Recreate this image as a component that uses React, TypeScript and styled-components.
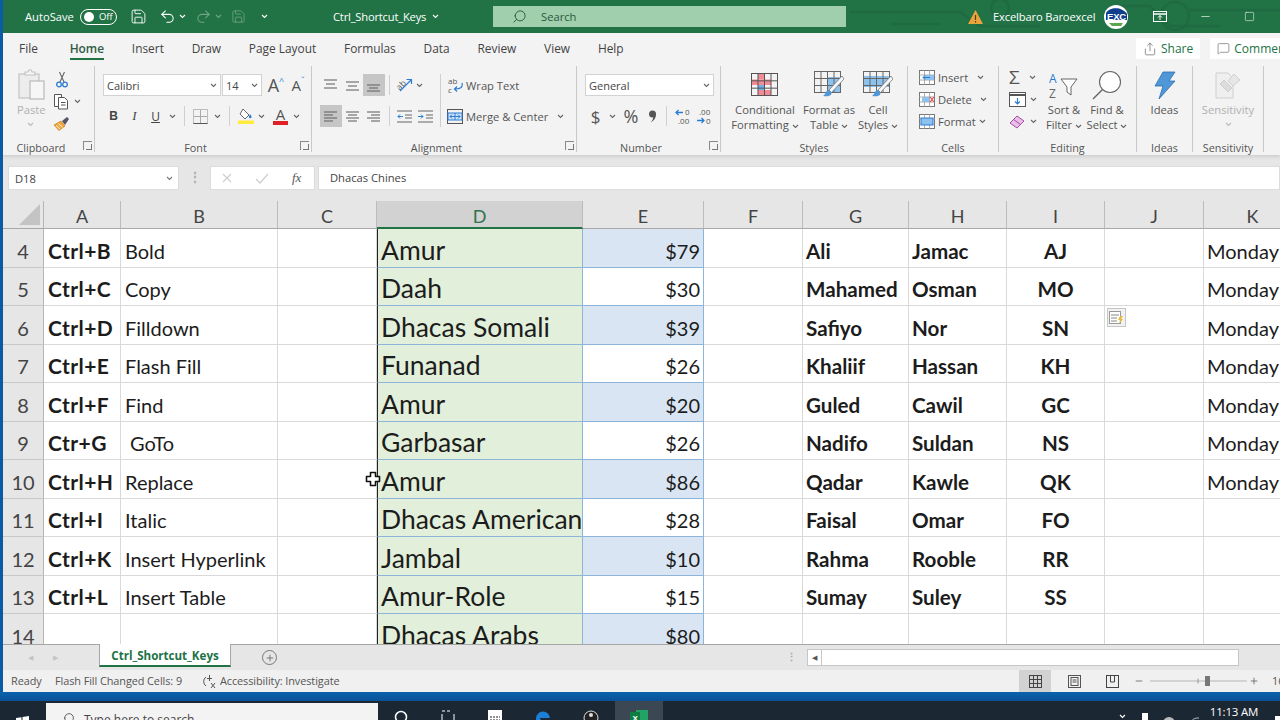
import * as React from 'react'
import styled, { createGlobalStyle } from 'styled-components'
import { Search, Save, Undo2, Redo2, Share, MessageSquare, Minus, Plus, Square } from 'lucide-react'

const UI = '"Open Sans", "Noto Sans", sans-serif'
const SHEET = 'Lato, "Liberation Sans", sans-serif'

const Global = createGlobalStyle`
  html, body { margin: 0; padding: 0; width: 1280px; height: 720px; overflow: hidden; background: #0a5ba6; }
  #root { width: 1280px; height: 720px; }
  * { box-sizing: border-box; }
`

const Screen = styled.div`
  width: 1280px;
  height: 720px;
  display: flex;
  flex-direction: column;
  overflow: hidden;
  font-family: ${UI};
`
const Desktop = styled.div`
  height: 692px;
  padding-left: 3px;
  background: #0a5ba6;
  flex-shrink: 0;
`
const Excel = styled.div`
  width: 1277px;
  height: 692px;
  display: flex;
  flex-direction: column;
  overflow: hidden;
  background: #e6e6e6;
`

/* title bar */
const TitleBar = styled.div`
  height: 33px;
  flex-shrink: 0;
  background: #217346;
  color: #fff;
  display: flex;
  align-items: center;
  font-size: 11.2px;
  position: relative;
  isolation: isolate;
`
const TitleArt = styled.svg`
  position: absolute;
  right: 0;
  top: 0;
  z-index: -1;
`
const Qat = styled.div`
  width: 330px;
  padding-left: 22px;
  display: flex;
  align-items: center;
  flex-shrink: 0;
`
const QatItem = styled.span<{ $ml?: number; $dim?: boolean }>`
  margin-left: ${p => p.$ml ?? 0}px;
  display: inline-flex;
  align-items: center;
  opacity: ${p => (p.$dim ? 0.35 : 1)};
`
const Toggle = styled.span`
  width: 37px;
  height: 16px;
  margin-left: 6px;
  border: 1px solid #fff;
  border-radius: 8px;
  display: flex;
  align-items: center;
  padding-left: 3px;
  gap: 5px;
  font-size: 9.5px;
  &::before {
    content: '';
    width: 10px;
    height: 10px;
    border-radius: 50%;
    background: #fff;
  }
`
const DocTitle = styled.div`
  width: 160px;
  flex-shrink: 0;
  display: flex;
  align-items: center;
  gap: 6px;
  letter-spacing: -0.2px;
`
const SearchBox = styled.div`
  width: 353px;
  height: 21px;
  flex-shrink: 0;
  background: #9fcfac;
  color: #2a5a3c;
  display: flex;
  align-items: center;
  padding-left: 19px;
  gap: 14px;
`
const Account = styled.div`
  margin-left: 122px;
  display: flex;
  align-items: center;
  flex-shrink: 0;
  letter-spacing: -0.15px;
`
const Who = styled.span`
  margin-left: 10px;
  width: 111px;
  white-space: nowrap;
`
const WinButton = styled.span<{ $ml: number }>`
  margin-left: ${p => p.$ml}px;
  display: inline-flex;
`

/* tabs */
const TabRow = styled.div`
  height: 29px;
  flex-shrink: 0;
  background: #f3f3f3;
  display: flex;
  align-items: flex-end;
`
const TabList = styled.div`
  width: 1133px;
  flex-shrink: 0;
  padding-left: 16px;
  display: flex;
  gap: 27.8px;
`
const Tab = styled.span<{ $on?: boolean; $first?: boolean }>`
  height: 27px;
  padding-top: 3px;
  line-height: 24px;
  font-size: 11.9px;
  color: ${p => (p.$on ? '#2f5a43' : '#444')};
  font-weight: ${p => (p.$on ? 600 : 400)};
  border-bottom: 2px solid ${p => (p.$on ? '#217346' : 'transparent')};
  margin-right: ${p => (p.$first ? 4 : 0)}px;
  margin-bottom: 2px;
`
const TabActions = styled.div`
  display: flex;
  gap: 10px;
  align-self: flex-start;
  margin-top: 5px;
  flex-shrink: 0;
`
const ActionButton = styled.span`
  height: 21px;
  padding: 0 7px;
  background: #fff;
  color: #217346;
  font-size: 12px;
  display: flex;
  align-items: center;
  gap: 4px;
  white-space: nowrap;
  flex-shrink: 0;
`

/* ribbon */
const Ribbon = styled.div`
  height: 93px;
  flex-shrink: 0;
  background: #f3f3f3;
  padding: 4px 0 3px;
  display: flex;
  box-shadow: 0 2px 3px #d0d0d0;
  position: relative;
`
const Group = styled.div<{ $w: number }>`
  width: ${p => p.$w}px;
  flex-shrink: 0;
  border-right: 1px solid #c9c9c9;
  display: flex;
  flex-direction: column;
`
const GroupBody = styled.div<{ $pl?: number; $pt?: number }>`
  flex: 1;
  padding: ${p => p.$pt ?? 8}px 0 0 ${p => p.$pl ?? 0}px;
  display: flex;
  min-height: 0;
`
const GroupLabel = styled.div<{ $launcher?: boolean }>`
  height: 17px;
  padding: 7px ${p => (p.$launcher ? 15 : 0)}px 0 0;
  line-height: 11px;
  font-size: 10.8px;
  color: #555;
  text-align: center;
  position: relative;
`
const Launcher = styled.span`
  position: absolute;
  right: 2px;
  top: 6px;
  width: 9px;
  height: 9px;
  border-left: 1px solid #888;
  border-top: 1px solid #888;
  &::after {
    content: '';
    position: absolute;
    right: 0;
    bottom: 0;
    width: 5px;
    height: 5px;
    border-right: 1.5px solid #777;
    border-bottom: 1.5px solid #777;
  }
`
const Stack = styled.div<{ $gap?: number; $w?: number }>`
  display: flex;
  flex-direction: column;
  gap: ${p => p.$gap ?? 9}px;
  width: ${p => (p.$w ? `${p.$w}px` : 'auto')};
  flex-shrink: 0;
`
const Row = styled.div<{ $h?: number }>`
  display: flex;
  align-items: center;
  height: ${p => p.$h ?? 22}px;
`
const Tool = styled.span<{ $w?: number; $on?: boolean; $ml?: number }>`
  width: ${p => p.$w ?? 21}px;
  height: 22px;
  margin-left: ${p => p.$ml ?? 0}px;
  flex-shrink: 0;
  display: inline-flex;
  align-items: center;
  justify-content: center;
  background: ${p => (p.$on ? '#c6c6c6' : 'transparent')};
  color: #444;
  font-size: 12px;
`
const ToolSep = styled.span<{ $mx?: number }>`
  width: 1px;
  height: 20px;
  background: #cfcfcf;
  margin: 0 ${p => p.$mx ?? 4}px;
  flex-shrink: 0;
`
const GroupSep = styled.span`
  width: 1px;
  height: 53px;
  background: #cfcfcf;
  flex-shrink: 0;
`
const Select = styled.div<{ $w: number }>`
  width: ${p => p.$w}px;
  height: 22px;
  background: #fff;
  border: 1px solid #d2d2d2;
  margin-right: 1px;
  flex-shrink: 0;
  display: flex;
  align-items: center;
  justify-content: space-between;
  padding: 0 3px 0 3px;
  font-size: 11px;
  color: #444;
`
const SmallText = styled.span<{ $dim?: boolean; $ml?: number }>`
  font-size: 11.2px;
  color: ${p => (p.$dim ? '#b0b0b0' : '#555')};
  white-space: nowrap;
  line-height: 15px;
  margin-left: ${p => p.$ml ?? 0}px;
`
const Big = styled.div<{ $w: number; $mt?: number }>`
  width: ${p => p.$w}px;
  margin-top: ${p => p.$mt ?? 0}px;
  flex-shrink: 0;
  display: flex;
  flex-direction: column;
  align-items: center;
`
const BigIcon = styled.div`
  height: 34px;
  display: flex;
  align-items: center;
  justify-content: center;
`
const ClipTools = styled.div`
  margin-left: 6px;
  display: flex;
  flex-direction: column;
`
const LetterFont = styled.span<{ $big?: boolean }>`
  font-size: ${p => (p.$big ? 18 : 15)}px;
  color: #555;
  font-family: ${UI};
`
const Sup = styled.span`
  color: #2b7cd3;
  font-size: 9px;
  line-height: 8px;
  align-self: flex-start;
  margin-top: 3px;
`
const ColorLetter = styled.span<{ $bar: string }>`
  display: inline-block;
  border-bottom: 4px solid ${p => p.$bar};
  font-size: 15px;
  line-height: 14px;
  color: #555;
  padding: 0 3px;
`
const Bold = styled.b`
  font-size: 12px;
  color: #444;
  font-family: "Liberation Sans", sans-serif;
`
const Ital = styled.i`
  font-size: 13px;
  color: #444;
  font-family: "Liberation Serif", serif;
`
const Under = styled.u`
  font-size: 12px;
  color: #444;
`
const Glyph = styled.span<{ $size: number }>`
  font-size: ${p => p.$size}px;
  color: #555;
`

/* formula bar */
const FormulaBar = styled.div`
  height: 46px;
  flex-shrink: 0;
  padding: 11px 0 11px 5px;
  display: flex;
  align-items: stretch;
  background: #e6e6e6;
`
const NameBox = styled.div`
  width: 171px;
  background: #fff;
  border: 1px solid #dcdcdc;
  display: flex;
  align-items: center;
  justify-content: space-between;
  padding: 0 5px 0 6px;
  font-size: 11.2px;
  color: #444;
`
const Dots = styled.div`
  width: 31px;
  text-align: center;
  color: #aaa;
  font-size: 12px;
  line-height: 22px;
  font-weight: 700;
`
const FxBox = styled.div`
  width: 105px;
  background: #fff;
  border: 1px solid #dcdcdc;
  display: flex;
  align-items: center;
  padding-left: 11px;
  gap: 23px;
`
const FxLabel = styled.i`
  font-family: "Liberation Serif", serif;
  font-size: 13px;
  color: #555;
`
const Input = styled.div`
  flex: 1;
  margin-left: 3px;
  background: #fff;
  border: 1px solid #dcdcdc;
  padding-left: 11px;
  font-size: 11.2px;
  line-height: 22px;
  color: #444;
`

/* sheet */
const SheetArea = styled.div`
  height: 443px;
  flex-shrink: 0;
  overflow: hidden;
  position: relative;
  background: #fff;
`
const Grid = styled.div`
  display: grid;
  grid-template-columns: 41px 77px 157px 99px 206px 121px 99px 106px 98px 98px 99px 98px;
  grid-template-rows: 28px;
  grid-auto-rows: 38.5px;
  width: 1400px;
  font-family: ${SHEET};
`
const Corner = styled.div`
  background: #e6e6e6;
  border-right: 1px solid #b5b5b5;
  border-bottom: 1px solid #a8a8a8;
  display: flex;
  align-items: flex-end;
  justify-content: flex-end;
  padding: 0 3px 3px 0;
  &::after {
    content: '';
    width: 0;
    height: 0;
    border-left: 21px solid transparent;
    border-bottom: 21px solid #c4c4c4;
  }
`
const ColHead = styled.div<{ $on?: boolean }>`
  background: ${p => (p.$on ? '#d2d2d2' : '#e6e6e6')};
  color: ${p => (p.$on ? '#2f7350' : '#444')};
  border-right: 1px solid #bcbcbc;
  border-bottom: ${p => (p.$on ? '2px solid #217346' : '1px solid #a8a8a8')};
  font-size: 18px;
  line-height: 31px;
  text-align: center;
`
const RowHead = styled.div`
  background: #e6e6e6;
  color: #444;
  border-right: 1px solid #b5b5b5;
  border-bottom: 1px solid #c8c8c8;
  font-size: 20px;
  display: flex;
  align-items: flex-end;
  justify-content: center;
  padding-bottom: 4px;
`
const Cell = styled.div<{ $bold?: boolean; $center?: boolean; $pad?: number }>`
  border-right: 1px solid #d9d9d9;
  border-bottom: 1px solid #d9d9d9;
  color: #1c1c1c;
  font-size: ${p => (p.$bold ? 20.6 : 20)}px;
  font-weight: ${p => (p.$bold ? 700 : 400)};
  display: flex;
  align-items: flex-end;
  justify-content: ${p => (p.$center ? 'center' : 'flex-start')};
  padding: 0 0 4px ${p => (p.$center ? 0 : p.$pad ?? 3)}px;
  white-space: pre;
  overflow: visible;
`
const KeyCell = styled(Cell)`
  font-size: 21px;
  letter-spacing: 0.45px;
`
const NameCell = styled.div`
  background: #e2efda;
  border-left: 1.5px solid #222;
  border-right: 1px solid #8db4d9;
  border-bottom: 1px solid #8db4d9;
  color: #1c1c1c;
  font-size: 26.5px;
  display: flex;
  align-items: flex-end;
  padding: 0 0 1px 3px;
  white-space: nowrap;
`
const PriceCell = styled.div<{ $tint: boolean }>`
  background: ${p => (p.$tint ? '#d9e5f3' : '#fff')};
  border-right: 1px solid #8db4d9;
  border-bottom: 1px solid #8db4d9;
  color: #1c1c1c;
  font-size: 20px;
  display: flex;
  align-items: flex-end;
  justify-content: flex-end;
  padding: 0 3px 4px 0;
`
const FlashTag = styled.div`
  position: absolute;
  left: 1104px;
  top: 107px;
  width: 19px;
  height: 19px;
  background: #f2f2f2;
  border: 1px solid #c6c6c6;
  display: flex;
  align-items: center;
  justify-content: center;
`
const CursorMark = styled.div`
  position: absolute;
  left: 362px;
  top: 270px;
  display: flex;
`

/* sheet tabs */
const SheetBar = styled.div`
  height: 26px;
  flex-shrink: 0;
  background: #e6e6e6;
  border-top: 1px solid #a6a6a6;
  display: flex;
  align-items: flex-start;
`
const NavArrows = styled.div`
  width: 96px;
  padding-left: 25px;
  height: 24px;
  display: flex;
  align-items: center;
  gap: 20px;
  color: #c4c4c4;
  font-size: 7px;
`
const SheetTab = styled.div`
  width: 132px;
  height: 23px;
  margin-top: -1px;
  padding-top: 1px;
  background: #fff;
  border-left: 1px solid #a6a6a6;
  border-right: 1px solid #a6a6a6;
  border-bottom: 2px solid #217346;
  color: #217346;
  font-size: 11.6px;
  font-weight: 700;
  letter-spacing: -0.02px;
  text-align: center;
  line-height: 22px;
  white-space: nowrap;
`
const AddSheet = styled.div`
  width: 15px;
  height: 15px;
  margin: 5px 0 0 31px;
  border: 1px solid #777;
  border-radius: 50%;
  display: flex;
  align-items: center;
  justify-content: center;
`
const Splitter = styled.div`
  margin: 0 0 0 506px;
  width: 16px;
  color: #aaa;
  font-size: 11px;
  line-height: 23px;
  font-weight: 700;
  text-align: center;
`
const ScrollBar = styled.div`
  display: flex;
  height: 17px;
  margin: 4px 0 0 8px;
  border: 1px solid #c6c6c6;
  background: #fff;
`
const ScrollArrow = styled.div`
  width: 14px;
  border-right: 1px solid #c6c6c6;
  color: #555;
  font-size: 7px;
  line-height: 15px;
  text-align: center;
`
const ScrollThumb = styled.div`
  width: 416px;
`

/* status bar */
const StatusBar = styled.div`
  height: 22px;
  flex-shrink: 0;
  background: #f0f0f0;
  display: flex;
  align-items: center;
  font-size: 10.9px;
  color: #555;
  letter-spacing: -0.08px;
`
const StatusText = styled.span<{ $ml: number; $w: number }>`
  margin-left: ${p => p.$ml}px;
  width: ${p => p.$w}px;
  padding-bottom: 2px;
  white-space: nowrap;
  flex-shrink: 0;
`
const ViewButton = styled.span<{ $on?: boolean; $w: number }>`
  width: ${p => p.$w}px;
  height: 22px;
  background: ${p => (p.$on ? '#d2d2d2' : 'transparent')};
  display: flex;
  align-items: center;
  justify-content: center;
  flex-shrink: 0;
`
const ZoomValue = styled.span`
  margin-left: 11px;
  padding-bottom: 2px;
  white-space: nowrap;
  flex-shrink: 0;
`

/* windows bits */
const BlueBar = styled.div`
  height: 9px;
  flex-shrink: 0;
  background: linear-gradient(#0a62ae, #0a5296);
`
const Taskbar = styled.div`
  height: 19px;
  flex-shrink: 0;
  background: #1b2733;
  display: flex;
  overflow: hidden;
  color: #fff;
`
const StartButton = styled.div`
  width: 46px;
  flex-shrink: 0;
  padding: 11px 0 0 16px;
`
const TaskSearch = styled.div`
  width: 332px;
  height: 19px;
  flex-shrink: 0;
  margin-top: 2px;
  background: #f3f3f3;
  color: #444;
  font-size: 12px;
  padding: 9px 0 0 16px;
  display: flex;
  gap: 9px;
  line-height: 16px;
  white-space: nowrap;
`
const TaskIcon = styled.div<{ $w?: number; $on?: boolean }>`
  width: ${p => p.$w ?? 48}px;
  background: ${p => (p.$on ? '#3b4752' : 'transparent')};
  display: flex;
  justify-content: center;
  padding-top: 9px;
  flex-shrink: 0;
`
const Tray = styled.div`
  display: flex;
  align-items: flex-start;
  flex-shrink: 0;
  padding-left: 453px;
`
const TrayIcon = styled.span<{ $w: number; $pt: number }>`
  width: ${p => p.$w}px;
  padding-top: ${p => p.$pt}px;
  display: flex;
  justify-content: center;
  flex-shrink: 0;
`
const Clock = styled.div`
  width: 54px;
  flex-shrink: 0;
  font-size: 11.5px;
  line-height: 22px;
  letter-spacing: -0.2px;
  text-align: center;
  white-space: nowrap;
`

/* drawings */
const Caret = ({ c = '#666', ml = 0 }: { c?: string; ml?: number }) => (
  <svg width="7" height="5" viewBox="0 0 7 5" style={{ marginLeft: ml, flexShrink: 0 }}>
    <path d="M1 1l2.500 2.500L6 1" fill="none" stroke={c} strokeWidth="1.100" />
  </svg>
)
const Lines = ({ rows }: { rows: number[][] }) => (
  <svg width="15" height="15" viewBox="0 0 15 15">
    {rows.map((r, i) => (
      <path key={i} d={`M${r[0]} ${r[2]}H${r[1]}`} stroke="#666" strokeWidth="1.100" />
    ))}
  </svg>
)
const TableGrid = ({ x, y, w, h, c = '#555' }: { x: number; y: number; w: number; h: number; c?: string }) => (
  <g fill="none" stroke={c} strokeWidth="1">
    <rect x={x} y={y} width={w} height={h} />
    <path d={`M${x + w / 4} ${y}v${h}M${x + w / 2} ${y}v${h}M${x + (3 * w) / 4} ${y}v${h}M${x} ${y + h / 3}h${w}M${x} ${y + (2 * h) / 3}h${w}`} />
  </g>
)
const PasteIcon = () => (
  <svg width="28" height="32" viewBox="0 0 28 32" fill="none" stroke="#c4c4c4" strokeWidth="1.200">
    <rect x="1" y="5" width="20" height="24" fill="#ececec" />
    <path d="M7 5V3h3l1-2 2 0 1 2h3v3H7z" fill="#f5f5f5" />
    <rect x="12" y="12" width="14" height="18" fill="#f6f6f6" stroke="#b9b9b9" />
  </svg>
)
const CutIcon = () => (
  <svg width="12" height="17" viewBox="0 0 12 17" fill="none">
    <path d="M3.500 1l4.500 10M8.500 1L4 11" stroke="#666" strokeWidth="1.100" />
    <circle cx="3" cy="13.500" r="2.300" stroke="#2b7cd3" strokeWidth="1.300" />
    <circle cx="9" cy="13.500" r="2.300" stroke="#2b7cd3" strokeWidth="1.300" />
  </svg>
)
const CopyIcon = () => (
  <svg width="17" height="17" viewBox="0 0 17 17" fill="#fff" stroke="#555" style={{ flexShrink: 0 }}>
    <path d="M1.500 1.500h7v12h-7z" />
    <path d="M5.500 4.500h6l3 3v8.500h-9z" />
    <path d="M8 9.500h4.500M8 12h4.500" />
  </svg>
)
const PainterIcon = () => (
  <svg width="17" height="15" viewBox="0 0 17 15">
    <path d="M1 9l7-4 4 5-6 4.500z" fill="#f0a93c" stroke="#c47f1e" strokeWidth=".7" />
    <path d="M3 9.500l4 3.500M5.500 7.700l4 3.500" stroke="#fff" strokeWidth=".8" />
    <path d="M9 5l5-4 2 2-4 6z" fill="#556" />
  </svg>
)
const BordersIcon = () => (
  <svg width="15" height="15" viewBox="0 0 15 15" fill="none" stroke="#aaa" style={{ flexShrink: 0 }}>
    <rect x=".5" y=".5" width="14" height="14" strokeDasharray="1 1" stroke="#888" />
    <path d="M7.500 1v13M1 7.500h13" />
    <path d="M.5 14.500h14" stroke="#555" />
  </svg>
)
const FillIcon = () => (
  <svg width="16" height="16" viewBox="0 0 16 16" style={{ flexShrink: 0 }}>
    <path d="M5 1l6 6-4 4-5-5z" fill="#fff" stroke="#666" />
    <path d="M12 6c1 1.500 1.500 2 1.500 3a1.300 1.300 0 0 1-2.600 0c0-1 .6-1.500 1.100-3z" fill="#2b7cd3" />
    <rect y="12.500" width="16" height="3.500" fill="#ffeb3b" />
  </svg>
)
const OrientIcon = () => (
  <svg width="17" height="16" viewBox="0 0 17 16">
    <text x="0" y="11" fontSize="8.500" fill="#555" fontFamily="Open Sans" transform="rotate(-45 5 8)">ab</text>
    <path d="M4 14L15 3M10.500 2.500H15.500V7" fill="none" stroke="#2b7cd3" strokeWidth="1.200" />
  </svg>
)
const IndentIcon = ({ dir }: { dir: 'in' | 'out' }) => (
  <svg width="15" height="13" viewBox="0 0 15 13" fill="none">
    <path d="M0 1h15M0 12h15M8 5h7M8 8h7" stroke="#666" />
    <path d={dir === 'out' ? 'M6 6.500H1M3 4.500L1 6.500l2 2' : 'M0 6.500h5M3 4.500l2 2-2 2'} stroke="#2b7cd3" />
  </svg>
)
const WrapIcon = () => (
  <svg width="15" height="17" viewBox="0 0 15 17">
    <text x="0" y="7" fontSize="8" fill="#555" fontFamily="Open Sans">ab</text>
    <text x="0" y="16" fontSize="8" fill="#555" fontFamily="Open Sans">c</text>
    <path d="M14 6c1 4-1 6-7 6M9 9.500L6.500 12 9 14.500" fill="none" stroke="#2b7cd3" strokeWidth="1.200" />
  </svg>
)
const MergeIcon = () => (
  <svg width="16" height="15" viewBox="0 0 16 15" fill="none">
    <rect x=".5" y=".5" width="15" height="14" stroke="#555" />
    <rect x="1" y="4" width="14" height="7" fill="#cfe3f6" stroke="#2b7cd3" />
    <path d="M3 7.500h10M5 5.500l-2 2 2 2M11 5.500l2 2-2 2M8 4v7" stroke="#2b7cd3" />
  </svg>
)
const CommaIcon = () => (
  <svg width="9" height="13" viewBox="0 0 9 13">
    <circle cx="4.500" cy="4" r="3.500" fill="#555" />
    <path d="M8 4c0 4-2 7-5.500 8.500C5 10 5.500 8 5 6z" fill="#555" />
  </svg>
)
const DecimalsIcon = ({ more }: { more?: boolean }) => (
  <svg width="18" height="17" viewBox="0 0 18 17">
    {more ? (
      <>
        <path d="M8 4.500H1M3.500 2L1 4.500 3.500 7" fill="none" stroke="#2b7cd3" strokeWidth="1.300" />
        <text x="10" y="7" fontSize="8" fill="#555" fontFamily="Open Sans">0</text>
        <text x="3" y="16" fontSize="8" fill="#555" fontFamily="Open Sans">.00</text>
      </>
    ) : (
      <>
        <text x="3" y="7" fontSize="8" fill="#555" fontFamily="Open Sans">.00</text>
        <path d="M1 12.500h7M5.500 10L8 12.500 5.500 15" fill="none" stroke="#2b7cd3" strokeWidth="1.300" />
        <text x="10" y="16" fontSize="8" fill="#555" fontFamily="Open Sans">0</text>
      </>
    )}
  </svg>
)
const CondFormatIcon = () => (
  <svg width="28" height="24" viewBox="0 0 28 24">
    <rect x="7" y="1" width="7" height="5.500" fill="#f28b96" />
    <rect x="1" y="6.500" width="19" height="5.500" fill="#f28b96" />
    <rect x="7" y="12" width="7" height="5" fill="#6fb1e8" />
    <rect x="7" y="17" width="13" height="6" fill="#f28b96" />
    <TableGrid x={.5} y={.5} w={26} h={22} />
  </svg>
)
const TableBrushIcon = ({ fill }: { fill: boolean }) => (
  <svg width="30" height="28" viewBox="0 0 30 28">
    {fill ? <rect x="13" y="6" width="14" height="16" fill="#8dc2ef" /> : <rect x="1" y="5" width="26" height="11" fill="#8dc2ef" />}
    <TableGrid x={.5} y={.5} w={26} h={21} c="#666" />
    <path d="M28 5L15 19l2.500 2.500L30 8z" fill="#f7f7f7" stroke="#777" strokeWidth=".8" />
    <path d="M15 19c-3 0-3 4-6 6 4 1 9 0 8.500-3.500z" fill="#4f97d7" />
  </svg>
)
const CellIcon = ({ kind }: { kind: 'insert' | 'delete' | 'format' }) => (
  <svg width="16" height="15" viewBox="0 0 16 15" style={{ flexShrink: 0 }}>
    <rect x=".5" y=".5" width="15" height="14" fill="#fff" stroke="#777" />
    <path d="M5.500 0v15M10.500 0v15M0 5h16M0 10h16" stroke="#999" strokeWidth=".8" />
    {kind === 'insert' && <><rect x="6" y="5" width="9" height="5" fill="#8dc2ef" /><path d="M11 7.500H4M6 5.500l-2 2 2 2" stroke="#2b7cd3" fill="none" /></>}
    {kind === 'delete' && <><rect x="3" y="5" width="7" height="5" fill="#8dc2ef" /><path d="M11 5l4 5M15 5l-4 5" stroke="#e04848" strokeWidth="1.200" /></>}
    {kind === 'format' && <rect x="2" y="4" width="12" height="7" fill="#8dc2ef" stroke="#2b7cd3" />}
  </svg>
)
const FillDownIcon = () => (
  <svg width="17" height="15" viewBox="0 0 17 15" fill="none" style={{ flexShrink: 0 }}>
    <rect x=".5" y=".5" width="16" height="14" fill="#fff" stroke="#555" />
    <path d="M1 3h15" stroke="#555" strokeWidth="2" />
    <path d="M8.500 6v6M6 9.500l2.500 2.500L11 9.500" stroke="#2b7cd3" strokeWidth="1.200" />
  </svg>
)
const EraserIcon = () => (
  <svg width="16" height="15" viewBox="0 0 16 15" style={{ flexShrink: 0 }}>
    <path d="M1 9l7-7 7 5-7 7z" fill="#e8bfe6" stroke="#a64ca6" />
    <path d="M4.500 5.500l7 5" stroke="#a64ca6" />
  </svg>
)
const SortIcon = () => (
  <svg width="30" height="28" viewBox="0 0 30 28">
    <text x="0" y="12" fontSize="12" fill="#2b7cd3" fontFamily="Open Sans">A</text>
    <text x="0" y="27" fontSize="12" fill="#666" fontFamily="Open Sans">Z</text>
    <path d="M12 8h16l-6 8v8l-4-3v-5z" fill="#fff" stroke="#666" />
  </svg>
)
const FindIcon = () => (
  <svg width="30" height="30" viewBox="0 0 30 30" fill="none" stroke="#666" strokeWidth="1.100">
    <circle cx="18" cy="12" r="10.500" fill="#fff" />
    <path d="M10.500 19.500L1 29" strokeWidth="1.500" />
  </svg>
)
const BoltIcon = () => (
  <svg width="22" height="29" viewBox="0 0 22 29">
    <path d="M9 1h12l-6 9h6L5 28l4-13H1z" fill="#4f97d7" stroke="#2b6fb3" strokeWidth=".8" />
  </svg>
)
const SensitivityIcon = () => (
  <svg width="28" height="30" viewBox="0 0 28 30" fill="none" stroke="#cfcfcf">
    <path d="M2 3h12l5 5v20H2z" fill="#efefef" />
    <path d="M6 14l8 8 4-4-8-8z" fill="#dcdcdc" />
    <path d="M14 11l6-7 6 6-7 6z" fill="#e6e6e6" />
  </svg>
)
const FlashIcon = () => (
  <svg width="15" height="14" viewBox="0 0 15 14">
    <rect x=".5" y=".5" width="11" height="12" fill="#fff" stroke="#999" />
    <path d="M2 4h8M2 7h6M2 10h6" stroke="#888" />
    <path d="M11 5h3l-2 3h2l-4 5 1-4H9z" fill="#e6b83c" />
  </svg>
)
const PlusCursor = () => (
  <svg width="16" height="16" viewBox="0 0 16 16">
    <path d="M5.500 1.500h5v4h4v5h-4v4h-5v-4h-4v-5h4z" fill="#fff" stroke="#111" strokeWidth="1.600" strokeLinejoin="round" />
  </svg>
)
const WarnIcon = () => (
  <svg width="15" height="14" viewBox="0 0 15 14">
    <path d="M7.500 0L15 14H0z" fill="#e8a33d" />
    <path d="M7.500 5v5M7.500 11v1.500" stroke="#5a3a10" strokeWidth="1.200" />
  </svg>
)
const Avatar = () => (
  <svg width="24" height="24" viewBox="0 0 24 24">
    <circle cx="12" cy="12" r="12" fill="#fff" />
    <path d="M2 8c3-6 16-7 21 1v6H2z" fill="#0f3f8c" />
    <text x="3" y="15" fontSize="9.500" fontWeight="700" fill="#fff" fontFamily="Liberation Sans">EXC</text>
    <path d="M5 18h14l-2 3H8z" fill="#5aa64a" />
  </svg>
)
const DisplayIcon = () => (
  <svg width="14" height="11" viewBox="0 0 14 11" fill="none" stroke="#fff">
    <rect x=".5" y=".5" width="13" height="10" />
    <path d="M.5 3h13" strokeWidth="1.500" />
    <path d="M7 9V4.500M5 6.500l2-2 2 2" />
  </svg>
)
const SmallCheck = () => (
  <svg width="14" height="11" viewBox="0 0 14 11" fill="none" stroke="#cfcfcf" strokeWidth="1.300">
    <path d="M1 6l4 4 8-9" />
  </svg>
)
const SmallCross = () => (
  <svg width="10" height="10" viewBox="0 0 10 10" fill="none" stroke="#cfcfcf" strokeWidth="1.300">
    <path d="M1 1l8 8M9 1l-8 8" />
  </svg>
)
const A11yIcon = () => (
  <svg width="15" height="15" viewBox="0 0 15 15" fill="none" stroke="#555" style={{ flexShrink: 0, marginLeft: 1 }}>
    <path d="M4 3a5.500 5.500 0 0 0 0 9" />
    <path d="M7.500 1v6M5 4.500h5M9 9l4 5M13 9l-4 5" />
  </svg>
)
const NormalView = () => (
  <svg width="13" height="13" viewBox="0 0 13 13" fill="none" stroke="#444">
    <rect x=".5" y=".5" width="12" height="12" />
    <path d="M4.500 0v13M8.500 0v13M0 4.500h13M0 8.500h13" />
  </svg>
)
const LayoutView = () => (
  <svg width="13" height="13" viewBox="0 0 13 13" fill="none" stroke="#555">
    <rect x=".5" y=".5" width="12" height="12" />
    <rect x="3" y="2.500" width="7" height="8" />
    <path d="M4.500 5h4M4.500 7h4" />
  </svg>
)
const BreakView = () => (
  <svg width="13" height="13" viewBox="0 0 13 13" fill="none" stroke="#444">
    <rect x=".5" y=".5" width="12" height="12" />
    <path d="M4.500 0v7h4V0" />
  </svg>
)
const ZoomSlider = () => (
  <svg width="97" height="14" viewBox="0 0 97 14" style={{ flexShrink: 0 }}>
    <path d="M0 7h97" stroke="#b5b5b5" />
    <path d="M48 4.500v5" stroke="#999" />
    <rect x="55" y="2" width="5" height="10" fill="#777" />
  </svg>
)
const WinLogo = () => (
  <svg width="13" height="13" viewBox="0 0 13 13" fill="#fff">
    <path d="M0 2l5.500-.8v5H0zM6.500 1L13 0v6.200H6.500zM0 7h5.500v5L0 11.200zM6.500 7H13v6l-6.500-1z" />
  </svg>
)
const TaskGlyph = ({ kind }: { kind: string }) => {
  if (kind === 'ring') return <svg width="14" height="14" viewBox="0 0 14 14"><circle cx="7" cy="7" r="5.500" fill="none" stroke="#fff" strokeWidth="1.500" /></svg>
  if (kind === 'view') return <svg width="14" height="14" viewBox="0 0 14 14" fill="none" stroke="#fff"><path d="M1 1h3M6 1h3M1 4v9h12V4" /></svg>
  if (kind === 'calc') return <svg width="14" height="14" viewBox="0 0 14 14"><rect width="14" height="14" fill="#fff" /><path d="M2 7h10M2 10h10" stroke="#1b2733" strokeDasharray="2 1" /></svg>
  if (kind === 'edge') return <svg width="16" height="14" viewBox="0 0 16 14"><path d="M1 9a7 7 0 0 1 14-1H5c0 3 5 4 9 2v3C8 15 1 14 1 9z" fill="#1c7fd6" /></svg>
  if (kind === 'obs') return <svg width="16" height="16" viewBox="0 0 16 16"><circle cx="8" cy="8" r="7" fill="#222" stroke="#ddd" /><circle cx="8" cy="5" r="2" fill="#ddd" /></svg>
  return <svg width="18" height="14" viewBox="0 0 18 14"><rect x="6" width="12" height="14" fill="#21a366" /><rect y="2" width="10" height="11" fill="#107c41" /><text x="2.500" y="11" fontSize="8" fill="#fff" fontWeight="700" fontFamily="Liberation Sans">X</text></svg>
}

const columns = ['A', 'B', 'C', 'D', 'E', 'F', 'G', 'H', 'I', 'J', 'K']
const rows = [
  { n: 4, key: 'Ctrl+B', what: 'Bold', item: 'Amur', price: '$79', first: 'Ali', last: 'Jamac', code: 'AJ', day: 'Monday' },
  { n: 5, key: 'Ctrl+C', what: 'Copy', item: 'Daah', price: '$30', first: 'Mahamed', last: 'Osman', code: 'MO', day: 'Monday' },
  { n: 6, key: 'Ctrl+D', what: 'Filldown', item: 'Dhacas Somali', price: '$39', first: 'Safiyo', last: 'Nor', code: 'SN', day: 'Monday' },
  { n: 7, key: 'Ctrl+E', what: 'Flash Fill', item: 'Funanad', price: '$26', first: 'Khaliif', last: 'Hassan', code: 'KH', day: 'Monday' },
  { n: 8, key: 'Ctrl+F', what: 'Find', item: 'Amur', price: '$20', first: 'Guled', last: 'Cawil', code: 'GC', day: 'Monday' },
  { n: 9, key: 'Ctr+G', what: ' GoTo', item: 'Garbasar', price: '$26', first: 'Nadifo', last: 'Suldan', code: 'NS', day: 'Monday' },
  { n: 10, key: 'Ctrl+H', what: 'Replace', item: 'Amur', price: '$86', first: 'Qadar', last: 'Kawle', code: 'QK', day: 'Monday' },
  { n: 11, key: 'Ctrl+I', what: 'Italic', item: 'Dhacas American', price: '$28', first: 'Faisal', last: 'Omar', code: 'FO', day: '' },
  { n: 12, key: 'Ctrl+K', what: 'Insert Hyperlink', item: 'Jambal', price: '$10', first: 'Rahma', last: 'Rooble', code: 'RR', day: '' },
  { n: 13, key: 'Ctrl+L', what: 'Insert Table', item: 'Amur-Role', price: '$15', first: 'Sumay', last: 'Suley', code: 'SS', day: '' },
  { n: 14, key: '', what: '', item: 'Dhacas Arabs', price: '$80', first: '', last: '', code: '', day: '' },
]
const tabs = ['Insert', 'Draw', 'Page Layout', 'Formulas', 'Data', 'Review', 'View', 'Help']

const App = () => (
  <Screen>
    <Global />
    <Desktop>
      <Excel>
        <TitleBar>
          <TitleArt width="430" height="33" viewBox="0 0 430 33" fill="none" stroke="#1f6a41" strokeWidth="2.500">
            <path d="M0 12h110l20 14h60M40 24h50M260 6h40l20 20h50M340 10h90" />
            <circle cx="150" cy="8" r="9" />
            <circle cx="325" cy="16" r="14" />
          </TitleArt>
          <Qat>
            <span>AutoSave</span>
            <Toggle>Off</Toggle>
            <QatItem $ml={13}><Save size={17} strokeWidth={1.3} /></QatItem>
            <QatItem $ml={12}><Undo2 size={17} strokeWidth={1.5} /></QatItem>
            <QatItem $ml={3}><Caret c="#fff" /></QatItem>
            <QatItem $ml={9} $dim><Redo2 size={17} strokeWidth={1.5} /></QatItem>
            <QatItem $ml={3} $dim><Caret c="#fff" /></QatItem>
            <QatItem $ml={9} $dim><Save size={15} strokeWidth={1.3} /></QatItem>
            <QatItem $ml={15}><Caret c="#fff" /></QatItem>
          </Qat>
          <DocTitle>Ctrl_Shortcut_Keys <Caret c="#fff" /></DocTitle>
          <SearchBox><Search size={15} strokeWidth={1.5} style={{ transform: 'scaleX(-1)' }} /> Search</SearchBox>
          <Account>
            <WarnIcon />
            <Who>Excelbaro Baroexcel</Who>
            <Avatar />
            <WinButton $ml={25}><DisplayIcon /></WinButton>
            <WinButton $ml={32}><Minus size={13} strokeWidth={1.2} /></WinButton>
            <WinButton $ml={32}><Square size={11} strokeWidth={1.2} /></WinButton>
          </Account>
        </TitleBar>

        <TabRow>
          <TabList>
            <Tab $first>File</Tab>
            <Tab $on>Home</Tab>
            {tabs.map(t => <Tab key={t}>{t}</Tab>)}
          </TabList>
          <TabActions>
            <ActionButton><Share size={14} strokeWidth={1.2} color="#666" /> Share</ActionButton>
            <ActionButton><MessageSquare size={13} strokeWidth={1.2} color="#666" /> Comments</ActionButton>
          </TabActions>
        </TabRow>

        <Ribbon>
          <Group $w={92}>
            <GroupBody $pt={2} $pl={14}>
              <Stack $gap={0} $w={30}>
                <BigIcon><PasteIcon /></BigIcon>
                <SmallText $dim>Paste</SmallText>
                <Row $h={14}><Caret c="#bbb" ml={10} /></Row>
              </Stack>
              <ClipTools>
                <Tool $w={17}><CutIcon /></Tool>
                <Row><CopyIcon /><Caret ml={4} /></Row>
                <Tool $w={17}><PainterIcon /></Tool>
              </ClipTools>
            </GroupBody>
            <GroupLabel $launcher>Clipboard<Launcher /></GroupLabel>
          </Group>

          <Group $w={217}>
            <GroupBody $pl={8}>
              <Stack>
                <Row>
                  <Select $w={118}>Calibri <Caret /></Select>
                  <Select $w={40}>14 <Caret /></Select>
                  <Tool $w={20} $ml={3}><LetterFont $big>A</LetterFont><Sup>^</Sup></Tool>
                  <Tool $w={20} $ml={2}><LetterFont>A</LetterFont><Sup>ˇ</Sup></Tool>
                </Row>
                <Row>
                  <Tool><Bold>B</Bold></Tool>
                  <Tool><Ital>I</Ital></Tool>
                  <Tool><Under>U</Under></Tool>
                  <Caret ml={3} />
                  <ToolSep $mx={8} />
                  <BordersIcon />
                  <Caret ml={6} />
                  <ToolSep $mx={8} />
                  <FillIcon />
                  <Caret ml={4} />
                  <Tool $w={21} $ml={5}><ColorLetter $bar="#e01f26">A</ColorLetter></Tool>
                  <Caret ml={1.5} />
                </Row>
              </Stack>
            </GroupBody>
            <GroupLabel $launcher>Font<Launcher /></GroupLabel>
          </Group>

          <Group $w={265}>
            <GroupBody $pl={8}>
              <Stack $w={120}>
                <Row>
                  <Tool $w={21.5}><Lines rows={[[1, 14, 2], [3, 12, 6], [1, 14, 10]]} /></Tool>
                  <Tool $w={21.5}><Lines rows={[[1, 14, 4], [3, 12, 8], [1, 14, 12]]} /></Tool>
                  <Tool $w={21.5} $on><Lines rows={[[1, 14, 7], [3, 12, 10], [1, 14, 13]]} /></Tool>
                  <ToolSep />
                  <Tool><OrientIcon /></Tool>
                  <Caret ml={1} />
                </Row>
                <Row>
                  <Tool $w={21.5} $on><Lines rows={[[1, 14, 3], [1, 10, 6], [1, 14, 9], [1, 10, 12]]} /></Tool>
                  <Tool $w={21.5}><Lines rows={[[1, 14, 3], [3, 12, 6], [1, 14, 9], [3, 12, 12]]} /></Tool>
                  <Tool $w={21.5}><Lines rows={[[1, 14, 3], [5, 14, 6], [1, 14, 9], [5, 14, 12]]} /></Tool>
                  <ToolSep />
                  <Tool><IndentIcon dir="out" /></Tool>
                  <Tool><IndentIcon dir="in" /></Tool>
                </Row>
              </Stack>
              <GroupSep />
              <Stack $w={130}>
                <Row>
                  <Tool $w={22} $ml={3}><WrapIcon /></Tool>
                  <SmallText>Wrap Text</SmallText>
                </Row>
                <Row>
                  <Tool $w={22} $ml={3}><MergeIcon /></Tool>
                  <SmallText>Merge &amp; Center</SmallText>
                  <Caret ml={9} />
                </Row>
              </Stack>
            </GroupBody>
            <GroupLabel $launcher>Alignment<Launcher /></GroupLabel>
          </Group>

          <Group $w={144}>
            <GroupBody $pl={8}>
              <Stack>
                <Row><Select $w={129}>General <Caret /></Select></Row>
                <Row>
                  <Tool $w={21}><Glyph $size={17}>$</Glyph></Tool>
                  <Caret ml={3} />
                  <Tool $w={22} $ml={4}><Glyph $size={18}>%</Glyph></Tool>
                  <Tool $w={21}><CommaIcon /></Tool>
                  <ToolSep $mx={3} />
                  <Tool $w={21} $ml={3}><DecimalsIcon more /></Tool>
                  <Tool $w={21}><DecimalsIcon /></Tool>
                </Row>
              </Stack>
            </GroupBody>
            <GroupLabel $launcher>Number<Launcher /></GroupLabel>
          </Group>

          <Group $w={187}>
            <GroupBody $pt={2} $pl={10}>
              <Big $w={68}>
                <BigIcon><CondFormatIcon /></BigIcon>
                <SmallText>Conditional</SmallText>
                <SmallText>Formatting <Caret /></SmallText>
              </Big>
              <Big $w={60}>
                <BigIcon><TableBrushIcon fill /></BigIcon>
                <SmallText>Format as</SmallText>
                <SmallText>Table <Caret /></SmallText>
              </Big>
              <Big $w={38}>
                <BigIcon><TableBrushIcon fill={false} /></BigIcon>
                <SmallText>Cell</SmallText>
                <SmallText>Styles <Caret /></SmallText>
              </Big>
            </GroupBody>
            <GroupLabel>Styles</GroupLabel>
          </Group>

          <Group $w={91}>
            <GroupBody $pt={0} $pl={11}>
              <Stack $gap={0}>
                <Row><CellIcon kind="insert" /><SmallText $ml={3}>Insert</SmallText><Caret ml={9} /></Row>
                <Row><CellIcon kind="delete" /><SmallText $ml={3}>Delete</SmallText><Caret ml={8} /></Row>
                <Row><CellIcon kind="format" /><SmallText $ml={3}>Format</SmallText><Caret ml={3} /></Row>
              </Stack>
            </GroupBody>
            <GroupLabel>Cells</GroupLabel>
          </Group>

          <Group $w={138}>
            <GroupBody $pt={0} $pl={10}>
              <Stack $gap={0} $w={34}>
                <Row><Glyph $size={19}>Σ</Glyph><Caret ml={9} /></Row>
                <Row><FillDownIcon /><Caret ml={4} /></Row>
                <Row><EraserIcon /><Caret ml={5} /></Row>
              </Stack>
              <Big $w={42} $mt={2}>
                <BigIcon><SortIcon /></BigIcon>
                <SmallText>Sort &amp;</SmallText>
                <SmallText>Filter <Caret /></SmallText>
              </Big>
              <Big $w={44} $mt={2}>
                <BigIcon><FindIcon /></BigIcon>
                <SmallText>Find &amp;</SmallText>
                <SmallText>Select <Caret /></SmallText>
              </Big>
            </GroupBody>
            <GroupLabel>Editing</GroupLabel>
          </Group>

          <Group $w={56}>
            <GroupBody $pt={2}>
              <Big $w={55}>
                <BigIcon><BoltIcon /></BigIcon>
                <SmallText>Ideas</SmallText>
              </Big>
            </GroupBody>
            <GroupLabel>Ideas</GroupLabel>
          </Group>

          <Group $w={71}>
            <GroupBody $pt={2}>
              <Big $w={70}>
                <BigIcon><SensitivityIcon /></BigIcon>
                <SmallText $dim>Sensitivity</SmallText>
                <Row $h={14}><Caret c="#bbb" /></Row>
              </Big>
            </GroupBody>
            <GroupLabel>Sensitivity</GroupLabel>
          </Group>
        </Ribbon>

        <FormulaBar>
          <NameBox>D18 <Caret c="#777" /></NameBox>
          <Dots>⋮</Dots>
          <FxBox><SmallCross /><SmallCheck /><FxLabel>fx</FxLabel></FxBox>
          <Input>Dhacas Chines</Input>
        </FormulaBar>

        <SheetArea>
          <Grid>
            <Corner />
            {columns.map(c => <ColHead key={c} $on={c === 'D'}>{c}</ColHead>)}
            {rows.map(r => (
              <React.Fragment key={r.n}>
                <RowHead>{r.n}</RowHead>
                <KeyCell $bold $pad={4}>{r.key}</KeyCell>
                <Cell $pad={4}>{r.what}</Cell>
                <Cell />
                <NameCell>{r.item}</NameCell>
                <PriceCell $tint={r.n % 2 === 0}>{r.price}</PriceCell>
                <Cell />
                <Cell $bold>{r.first}</Cell>
                <Cell $bold>{r.last}</Cell>
                <Cell $bold $center>{r.code}</Cell>
                <Cell />
                <Cell>{r.day}</Cell>
              </React.Fragment>
            ))}
          </Grid>
          <FlashTag><FlashIcon /></FlashTag>
          <CursorMark><PlusCursor /></CursorMark>
        </SheetArea>

        <SheetBar>
          <NavArrows><span>◀</span><span>▶</span></NavArrows>
          <SheetTab>Ctrl_Shortcut_Keys</SheetTab>
          <AddSheet><Plus size={10} color="#666" /></AddSheet>
          <Splitter>⋮</Splitter>
          <ScrollBar>
            <ScrollArrow>◀</ScrollArrow>
            <ScrollThumb />
          </ScrollBar>
        </SheetBar>

        <StatusBar>
          <StatusText $ml={8} $w={36}>Ready</StatusText>
          <StatusText $ml={8} $w={146}>Flash Fill Changed Cells: 9</StatusText>
          <A11yIcon />
          <StatusText $ml={3} $w={799}>Accessibility: Investigate</StatusText>
          <ViewButton $on $w={32}><NormalView /></ViewButton>
          <ViewButton $w={46}><LayoutView /></ViewButton>
          <ViewButton $w={30}><BreakView /></ViewButton>
          <ViewButton $w={23}><Minus size={10} color="#666" /></ViewButton>
          <ZoomSlider />
          <ViewButton $w={14}><Plus size={10} color="#666" /></ViewButton>
          <ZoomValue>160%</ZoomValue>
        </StatusBar>
      </Excel>
    </Desktop>
    <BlueBar />
    <Taskbar>
      <StartButton><WinLogo /></StartButton>
      <TaskSearch><Search size={13} strokeWidth={1.5} style={{ transform: 'scaleX(-1)' }} />Type here to search</TaskSearch>
      <TaskIcon $w={46}><TaskGlyph kind="ring" /></TaskIcon>
      <TaskIcon $w={47}><TaskGlyph kind="view" /></TaskIcon>
      <TaskIcon><TaskGlyph kind="calc" /></TaskIcon>
      <TaskIcon><TaskGlyph kind="edge" /></TaskIcon>
      <TaskIcon><TaskGlyph kind="obs" /></TaskIcon>
      <TaskIcon $on><TaskGlyph kind="excel" /></TaskIcon>
      <Tray>
        <TrayIcon $w={12} $pt={13}><Caret c="#fff" /></TrayIcon>
        <TrayIcon $w={34} $pt={12}><svg width="6" height="14"><rect width="6" height="14" fill="#fff" /></svg></TrayIcon>
        <TrayIcon $w={12} $pt={13}><svg width="14" height="12"><path d="M1 9a6 6 0 0 1 12 0v3H1z" fill="#bbb" /></svg></TrayIcon>
        <TrayIcon $w={33} $pt={15}><svg width="12" height="12" fill="none" stroke="#bbb" style={{ marginLeft: 9 }}><path d="M1 8a8 8 0 0 1 9-6" /></svg></TrayIcon>
        <Clock>11:13 AM</Clock>
        <TrayIcon $w={34} $pt={15}><svg width="6" height="12"><rect width="6" height="12" fill="#fff" /></svg></TrayIcon>
      </Tray>
    </Taskbar>
  </Screen>
)

export default App
